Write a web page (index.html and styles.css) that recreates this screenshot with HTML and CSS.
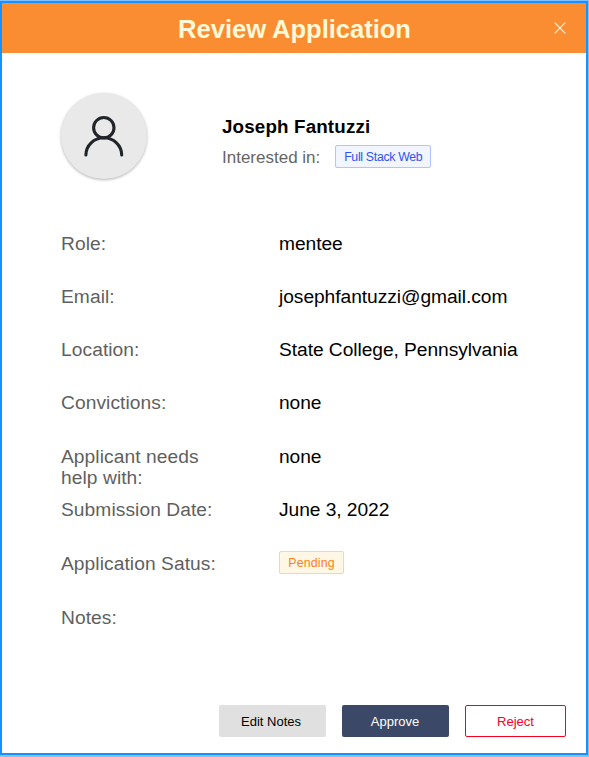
FILE: index.html
```html
<!DOCTYPE html>
<html lang="en">
<head>
<meta charset="utf-8">
<title>Review Application</title>
<link rel="stylesheet" href="styles.css">
</head>
<body>
<main class="modal">
  <header class="modal-header">
    <h1 class="title">Review Application</h1>
    <button class="close" aria-label="Close">
      <svg width="12" height="12" viewBox="0 0 12 12"><path d="M.7.7l10.6 10.6M11.3.7L.7 11.3"/></svg>
    </button>
  </header>
  <section class="profile">
    <div class="avatar">
      <svg width="40" height="42" viewBox="0 0 40 42"><circle cx="19.8" cy="12.7" r="10.2"/><path d="M1.9 40a17.9 17.3 0 0 1 35.8 0"/></svg>
    </div>
    <div class="identity">
      <h2 class="name">Joseph Fantuzzi</h2>
      <div class="interest"><span>Interested in:</span><span class="tag tag-blue">Full Stack Web</span></div>
    </div>
  </section>
  <dl class="details">
    <dt>Role:</dt><dd>mentee</dd>
    <dt>Email:</dt><dd>josephfantuzzi@gmail.com</dd>
    <dt>Location:</dt><dd>State College, Pennsylvania</dd>
    <dt>Convictions:</dt><dd>none</dd>
    <dt>Applicant needs help with:</dt><dd>none</dd>
    <dt>Submission Date:</dt><dd>June 3, 2022</dd>
    <dt>Application Satus:</dt><dd><span class="tag tag-orange">Pending</span></dd>
    <dt>Notes:</dt><dd></dd>
  </dl>
  <footer class="actions">
    <button class="btn btn-edit">Edit Notes</button>
    <button class="btn btn-approve">Approve</button>
    <button class="btn btn-reject">Reject</button>
  </footer>
</main>
</body>
</html>
```
FILE: styles.css
```css
* { box-sizing: border-box; }
body {
  margin: 0;
  height: 757px;
  overflow: hidden;
  background: #80c2ff;
  font-family: "Liberation Sans", Arial, sans-serif;
}
.modal {
  width: 588px;
  height: 754px;
  margin-top: 1px;
  border: 2px solid #1890ff;
  background: #fff;
  display: flex;
  flex-direction: column;
}
.modal-header {
  height: 50px;
  flex: none;
  background: #fa8c32;
  display: grid;
  grid-template-columns: 53px 1fr 52px;
  align-items: center;
}
.title {
  grid-column: 2;
  margin: 0;
  padding-top: 1px;
  text-align: center;
  color: #fff9d8;
  font-size: 25.6px;
  line-height: 30px;
  letter-spacing: -.05px;
}
.close {
  display: grid;
  place-items: center;
  width: 52px;
  height: 48px;
  padding: 0;
  border: 0;
  background: none;
}
.close svg { stroke: #fff4dc; stroke-width: 1.2; }
.profile {
  display: flex;
  padding: 40px 0 0 59px;
  height: 177px;
}
.avatar {
  width: 86px;
  height: 86px;
  border-radius: 50%;
  background: #e9e9e9;
  box-shadow: 0 1px 3px rgba(0, 0, 0, .3);
  display: grid;
  place-items: center;
}
.avatar svg {
  fill: none;
  stroke: #212529;
  stroke-width: 3.1;
  stroke-linecap: round;
}
.identity { padding: 23px 0 0 75px; }
.name {
  margin: 0;
  font-size: 18.8px;
  line-height: 22px;
  letter-spacing: .15px;
  color: #000;
}
.interest {
  display: flex;
  align-items: flex-start;
  gap: 15px;
  height: 24px;
  margin-top: 7px;
  font-size: 17px;
  line-height: 25px;
  color: #666;
}
.tag {
  display: inline-block;
  height: 23px;
  border: 1px solid;
  border-radius: 2px;
  font-size: 12.3px;
  line-height: 22px;
  text-align: center;
  white-space: nowrap;
}
.tag-blue { width: 96px; letter-spacing: -.3px; color: #2f54eb; background: #f0f5ff; border-color: #adc6ff; }
.tag-orange { color: #fa8016; background: #fff7e6; border-color: #ffd591; }
.details {
  display: grid;
  grid-template-columns: 160px 1fr;
  grid-template-rows: repeat(5, 53.1px) 54.2px 54.2px 54px;
  column-gap: 58px;
  margin: 0;
  padding: 3.15px 40px 0 59px;
  font-size: 19.2px;
  line-height: 21.4px;
}
.details dt { color: #5f5f5f; letter-spacing: .07px; }
.details dd { margin: 0; color: #000; letter-spacing: -.05px; }
.details .tag { display: block; width: 65px; margin-top: -2px; letter-spacing: .2px; }
.actions {
  display: flex;
  justify-content: flex-end;
  gap: 16px;
  margin-top: auto;
  padding: 0 20px 16px;
}
.btn {
  width: 107px;
  height: 32px;
  padding: 0;
  border: 0;
  border-radius: 2px;
  font-family: inherit;
  font-size: 13px;
}
.btn-edit { background: #e0e0e0; color: #000; padding-right: 3px; }
.btn-approve { background: #3c4868; color: #fff; padding-right: 1px; }
.btn-reject { width: 101px; border: 1px solid #f5001d; background: #fff; color: #f5001d; }
```
